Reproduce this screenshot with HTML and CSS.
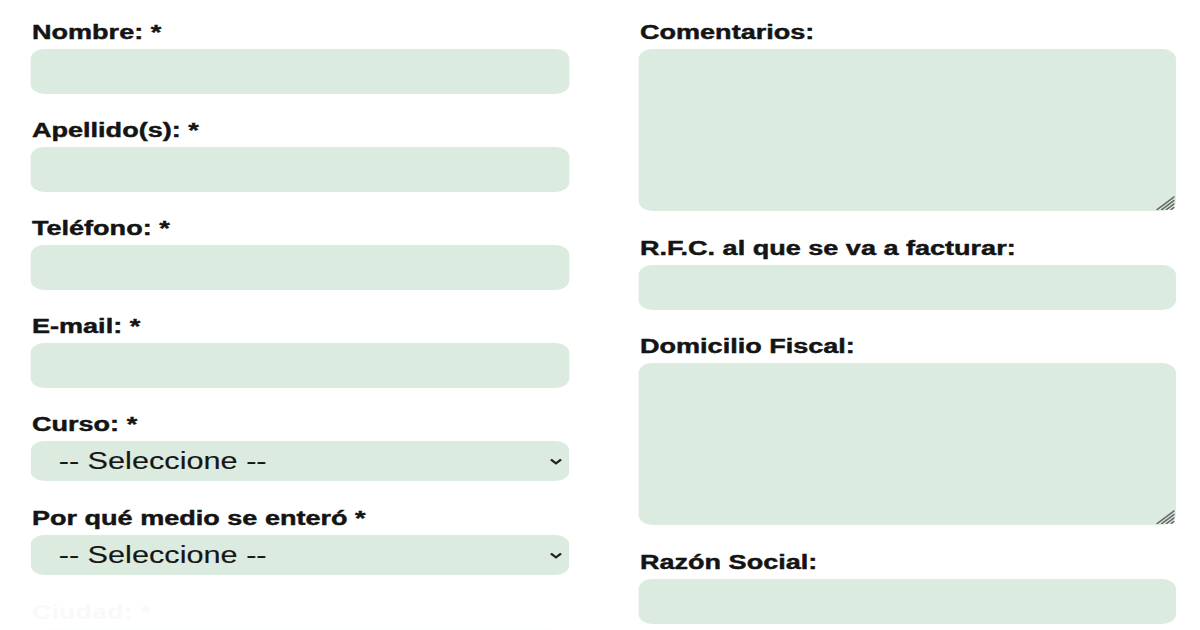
FILE: index.html
```html
<!DOCTYPE html>
<html lang="es">
<head>
<meta charset="utf-8">
<title>Formulario</title>
<link rel="stylesheet" href="styles.css">
</head>
<body>
<div class="page">
  <form class="form">
    <div class="col">
      <div class="field">
        <label class="label">Nombre: *</label>
        <input class="input" type="text">
      </div>
      <div class="field">
        <label class="label">Apellido(s): *</label>
        <input class="input" type="text">
      </div>
      <div class="field">
        <label class="label">Teléfono: *</label>
        <input class="input" type="text">
      </div>
      <div class="field">
        <label class="label">E-mail: *</label>
        <input class="input" type="text">
      </div>
      <div class="field field-select">
        <label class="label">Curso: *</label>
        <select class="select"><option>-- Seleccione --</option></select>
      </div>
      <div class="field field-select">
        <label class="label">Por qué medio se enteró *</label>
        <select class="select"><option>-- Seleccione --</option></select>
      </div>
      <div class="field field-fading">
        <label class="label">Ciudad: *</label>
        <input class="input" type="text">
      </div>
    </div>
    <div class="col">
      <div class="field field-area">
        <label class="label">Comentarios:</label>
        <div class="area-wrap">
          <textarea class="textarea"></textarea>
          <svg class="grip" width="15" height="15" viewBox="0 0 15 15" aria-hidden="true">
            <path d="M15 1.5L1.5 15M15 5L5 15M15 8.5L8.5 15M15 12L12 15" stroke="#6a6a6a" stroke-width="1.4" fill="none"/>
          </svg>
        </div>
      </div>
      <div class="field">
        <label class="label">R.F.C. al que se va a facturar:</label>
        <input class="input" type="text">
      </div>
      <div class="field field-area">
        <label class="label">Domicilio Fiscal:</label>
        <div class="area-wrap">
          <textarea class="textarea"></textarea>
          <svg class="grip" width="15" height="15" viewBox="0 0 15 15" aria-hidden="true">
            <path d="M15 1.5L1.5 15M15 5L5 15M15 8.5L8.5 15M15 12L12 15" stroke="#6a6a6a" stroke-width="1.4" fill="none"/>
          </svg>
        </div>
      </div>
      <div class="field">
        <label class="label">Razón Social:</label>
        <input class="input" type="text">
      </div>
    </div>
  </form>
</div>
</body>
</html>
```

FILE: styles.css
```css
html, body {
  margin: 0;
  padding: 0;
  background: #ffffff;
  overflow: hidden;
}

body {
  width: 1200px;
  height: 630px;
  font-family: "Liberation Sans", Arial, sans-serif;
  color: #161616;
}

.page {
  width: 900px;
  transform: scaleX(1.3333);
  transform-origin: 0 0;
}

.form {
  display: grid;
  grid-template-columns: 404px 403px;
  column-gap: 52px;
  padding: 20px 0 0 23px;
  align-items: start;
}

.col {
  display: flex;
  flex-direction: column;
}

.field {
  display: flex;
  flex-direction: column;
  margin-bottom: 24px;
}

.label {
  font-size: 20.3px;
  line-height: 24px;
  font-weight: 700;
  color: #141414;
  -webkit-text-stroke: 0.45px #141414;
  margin-bottom: 5px;
  padding-left: 1px;
  white-space: nowrap;
}

.input,
.select,
.textarea {
  display: block;
  box-sizing: border-box;
  width: 100%;
  margin: 0;
  border: none;
  outline: none;
  background-color: #dcebdf;
  border-radius: 10px;
  font-family: "Liberation Sans", Arial, sans-serif;
  color: #161616;
}

.input {
  height: 45px;
}

.field-select {
  margin-bottom: 25px;
}

.select {
  height: 40px;
  font-size: 23px;
  padding: 0 30px 0 21px;
  -webkit-text-stroke: 0.15px #161616;
  -webkit-appearance: none;
  appearance: none;
  background-image: url("data:image/svg+xml,%3Csvg xmlns='http://www.w3.org/2000/svg' width='10' height='7' viewBox='0 0 10 7'%3E%3Cpath d='M1.2 1.5l3.8 3.8 3.8-3.8' fill='none' stroke='%23222' stroke-width='1.9'/%3E%3C/svg%3E");
  background-repeat: no-repeat;
  background-position: right 5px center;
  background-size: 10px 7px;
}

.field-area {
  margin-bottom: 25px;
}

.area-wrap {
  position: relative;
}

.textarea {
  height: 162px;
  resize: none;
  padding: 8px 12px;
  font-size: 16px;
}

.grip {
  position: absolute;
  right: 1px;
  bottom: 1px;
  display: block;
}

.field-fading .label {
  opacity: 0.02;
  -webkit-text-stroke: 0;
}

.field-fading .input {
  opacity: 0.3;
  transform: scale(0.97);
}
```
